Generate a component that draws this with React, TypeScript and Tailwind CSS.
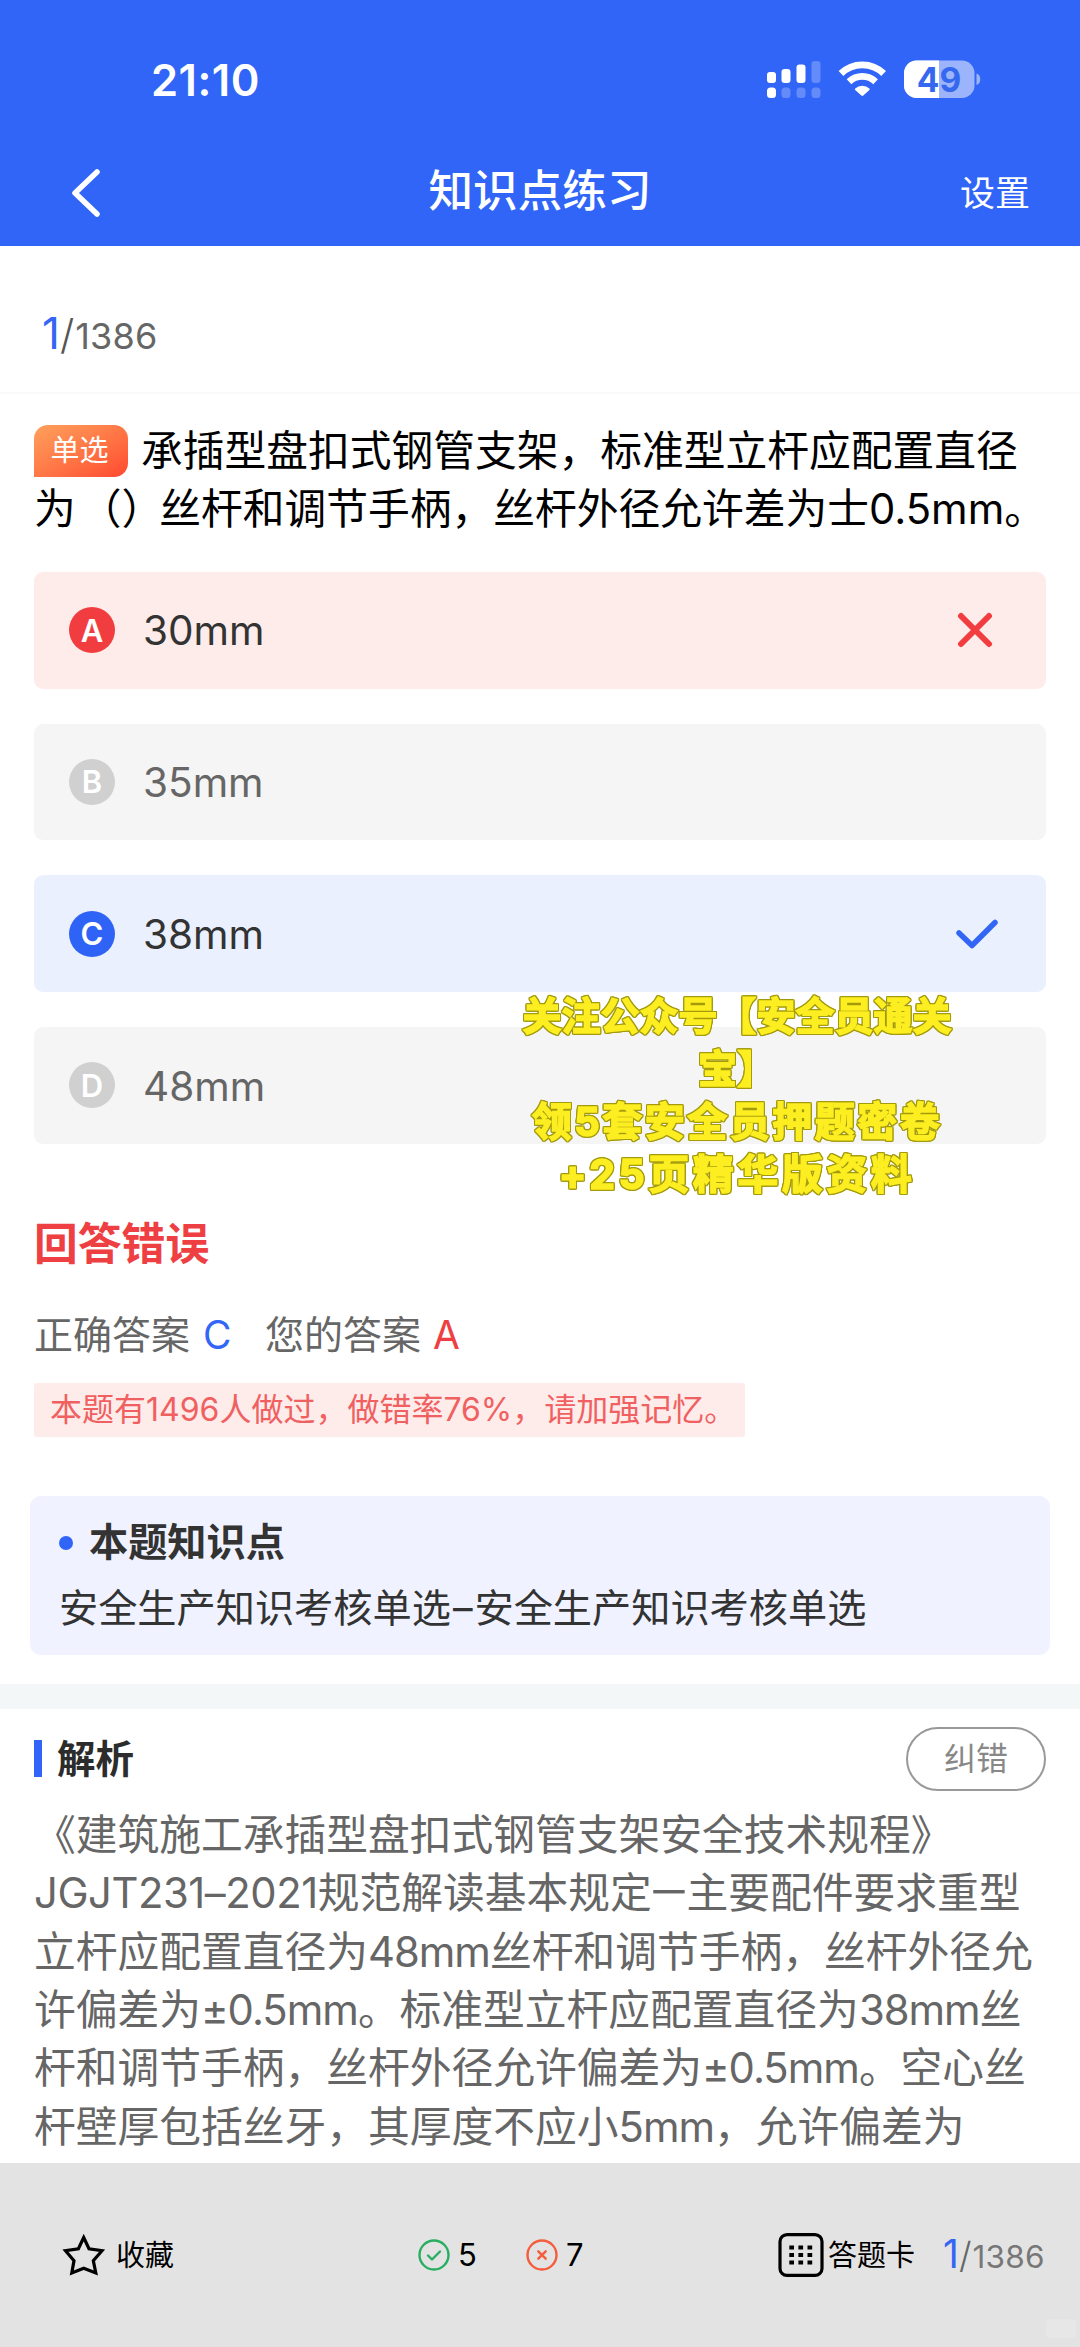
import React from "react";

type OptionState = "wrong" | "right" | "plain";

const optionBg: Record<OptionState, string> = {
  wrong: "bg-[#feeceb]",
  right: "bg-[#eaf0fe]",
  plain: "bg-[#f5f5f5]",
};
const optionBadge: Record<OptionState, string> = {
  wrong: "bg-[#f23d40]",
  right: "bg-[#2f63f6]",
  plain: "bg-[#d0d0d0]",
};
const optionText: Record<OptionState, string> = {
  wrong: "text-[#333]",
  right: "text-[#333]",
  plain: "text-[#666]",
};

const options: { letter: string; text: string; state: OptionState }[] = [
  { letter: "A", text: "30mm", state: "wrong" },
  { letter: "B", text: "35mm", state: "plain" },
  { letter: "C", text: "38mm", state: "right" },
  { letter: "D", text: "48mm", state: "plain" },
];

function Cross() {
  return (
    <svg className="mr-[53px] h-[36px] w-[36px]" viewBox="0 0 36 36" fill="none" stroke="#f23d40" strokeWidth="6" strokeLinecap="round">
      <path d="M4 4 32 32M32 4 4 32" />
    </svg>
  );
}

function Check() {
  return (
    <svg className="mr-[47px] h-[30px] w-[44px]" viewBox="0 0 44 30" fill="none" stroke="#3366f5" strokeWidth="5.500" strokeLinecap="round" strokeLinejoin="round">
      <path d="M4 14 17 26.500 40 3.500" />
    </svg>
  );
}

function Option({ letter, text, state }: { letter: string; text: string; state: OptionState }) {
  return (
    <div className={`flex h-[116.700px] items-center rounded-[9px] pl-[35px] ${optionBg[state]}`}>
      <span className={`flex h-[46px] w-[46px] items-center justify-center rounded-full pt-px text-[31px] font-semibold text-white ${optionBadge[state]}`}>
        {letter}
      </span>
      <span className={`ml-[28px] flex-1 pt-[3px] text-[40.500px] ${optionText[state]}`}>{text}</span>
      {state === "wrong" && <Cross />}
      {state === "right" && <Check />}
    </div>
  );
}

function StatusIcons() {
  return (
    <svg className="h-[40px] w-[216px]" viewBox="0 0 216 40">
      <g fill="#fff">
        <rect x="1" y="12" width="9" height="11" rx="3" />
        <rect x="15.500" y="9" width="9" height="14" rx="3" />
        <rect x="30.500" y="4.500" width="9" height="18.500" rx="3" />
        <rect x="45.500" y="1" width="9" height="22" rx="3" opacity=".25" />
        <rect x="1" y="27.500" width="9" height="10.500" rx="3.500" />
        <rect x="15.500" y="27.500" width="9" height="10.500" rx="3.500" opacity=".25" />
        <rect x="30.500" y="27.500" width="9" height="10.500" rx="3.500" opacity=".25" />
        <rect x="45.500" y="27.500" width="9" height="10.500" rx="3.500" opacity=".25" />
      </g>
      <g fill="none" stroke="#fff" strokeWidth="6.800">
        <path d="M75 13.500A30.500 30.500 0 0 1 117.600 13.500" />
        <path d="M83 21.700A19.500 19.500 0 0 1 109.600 21.700" />
      </g>
      <path fill="#fff" d="M89.200 28.600A10.500 10.500 0 0 1 103.400 28.600Q104 29.300 103.400 30L97.300 35.600Q96.300 36.400 95.300 35.600L89.200 30Q88.600 29.300 89.200 28.600Z" />
      <rect x="138" y="0.500" width="70.500" height="37.500" rx="12.500" fill="#9bb4fb" />
      <path fill="#fff" d="M173 0.500H150.500A12.500 12.500 0 0 0 138 13V25.500A12.500 12.500 0 0 0 150.500 38H173Z" />
      <path fill="#9bb4fb" d="M210.500 13.500C215.500 14.500 215.500 24 210.500 25Z" />
      <text x="173" y="31.500" textAnchor="middle" fontSize="33.500" fontWeight="700" fill="#3568ee">49</text>
    </svg>
  );
}

function Header() {
  return (
    <header className="flex h-[246px] flex-col bg-[#3065f8] text-white">
      <div className="flex h-[136px] items-start justify-between pt-[60px] pl-[151px] pr-[98px]">
        <span className="text-[43.500px] leading-[40px] font-semibold tracking-[0.5px]">21:10</span>
        <StatusIcons />
      </div>
      <div className="grid h-[110px] grid-cols-3 items-center">
        <svg className="ml-[69px] h-[50px] w-[34px]" viewBox="0 0 34 50" fill="none" stroke="#fff" strokeWidth="5.500" strokeLinecap="round" strokeLinejoin="round">
          <path d="M28 4 6 25 28 46" />
        </svg>
        <h1 className="pb-[3px] text-center text-[44.600px] leading-[107px] font-medium whitespace-nowrap">知识点练习</h1>
        <span className="pr-[50px] text-right text-[35px] leading-[114px]">设置</span>
      </div>
    </header>
  );
}

const explanation: string[] = [
  "《建筑施工承插型盘扣式钢管支架安全技术规程》",
  "JGJT231–2021规范解读基本规定一主要配件要求重型",
  "立杆应配置直径为48mm丝杆和调节手柄，丝杆外径允",
  "许偏差为±0.5mm。标准型立杆应配置直径为38mm丝",
  "杆和调节手柄，丝杆外径允许偏差为±0.5mm。空心丝",
  "杆壁厚包括丝牙，其厚度不应小5mm，允许偏差为",
];

/** Sets Latin runs and the narrow dash slightly tighter than the Chinese text. */
function Mixed({ text }: { text: string }) {
  const parts = text.split(/([A-Z0-9–]{6,}|[0-9.±m]+|一)/);
  return (
    <>
      {parts.map((p, i) => {
        if (i % 2 === 0) return p;
        const cls =
          p === "一"
            ? "-mx-[3.500px] inline-block scale-x-[0.82]"
            : p.length > 6
              ? "tracking-[-0.45px]"
              : "tracking-[-1px]";
        return (
          <span key={i} className={cls}>
            {p}
          </span>
        );
      })}
    </>
  );
}

function PromoText() {
  return (
    <div className="absolute top-[989px] left-[516px] w-[442px] text-center text-[39px] leading-[53px] font-bold whitespace-nowrap text-[#fcee21] [-webkit-text-stroke:1.5px_#fcee21] [filter:drop-shadow(1px_0_0_#a39a0c)_drop-shadow(-1px_0_0_#a39a0c)_drop-shadow(0_1px_0_#a39a0c)_drop-shadow(0_-1px_0_#a39a0c)]">
      <div>关注公众号【安全员通关</div>
      <div>宝】</div>
      <div className="text-[40px] tracking-[2.500px]">领5套安全员押题密卷</div>
      <div className="text-[41px] tracking-[3.500px]">+25页精华版资料</div>
    </div>
  );
}

function Footer() {
  return (
    <footer className="relative flex h-[184px] items-center bg-[#e3e3e3] text-[29px] text-black">
      <svg className="ml-[61px] h-[46px] w-[46px]" viewBox="0 0 46 46" fill="none" stroke="#000" strokeWidth="3.200" strokeLinejoin="miter">
        <path d="M22.700 5.500 28 16.800 41 18.700 32.300 28.600 34.800 41 22.700 36.200 10.800 41 13 28.600 4.500 18.700 17.400 16.800Z" />
      </svg>
      <span className="ml-[9px] w-[60px] pt-[2px]">收藏</span>
      <svg className="ml-[242px] h-[32px] w-[32px]" viewBox="0 0 32 32" fill="none" stroke="#27ae60" strokeWidth="2.400" strokeLinecap="round" strokeLinejoin="round">
        <circle cx="16" cy="16" r="14.500" />
        <path d="M10 16.500 14 20.500 22 12.500" />
      </svg>
      <span className="ml-[8px] w-[20px] text-[31px]">5</span>
      <svg className="ml-[48px] h-[32px] w-[32px]" viewBox="0 0 32 32" fill="none" stroke="#f45c3c" strokeWidth="2.400" strokeLinecap="round">
        <circle cx="16" cy="16" r="14.500" />
        <path d="M12.300 12.300 19.700 19.700M19.700 12.300 12.300 19.700" />
      </svg>
      <span className="ml-[8px] w-[20px] text-[31px]">7</span>
      <svg className="ml-[192px] h-[44px] w-[46px]" viewBox="0 0 46 44" fill="none" stroke="#000" strokeWidth="3.200">
        <rect x="2" y="1.600" width="42" height="40.800" rx="7" />
        <g strokeWidth="4" strokeDasharray="4.700 4.400">
          <path d="M11.300 14.500H34.300" />
          <path d="M11.300 22H34.300" />
          <path d="M11.300 29.500H34.300" />
        </g>
      </svg>
      <span className="ml-[4px] w-[90px] pt-[2px] whitespace-nowrap">答题卡</span>
      <span className="ml-[25px] flex items-baseline whitespace-nowrap">
        <span className="text-[39px] leading-[50px] text-[#3366f5]">1</span>
        <span className="text-[36px] font-light text-[#666]">/</span>
        <span className="ml-px text-[31.500px] tracking-[0.3px] text-[#777]">1386</span>
      </span>
      <span className="absolute right-[4px] bottom-[9px] h-[19px] w-[30px] rounded-[4px] bg-[#e7e7e7]" />
    </footer>
  );
}

export default function App() {
  return (
    <div className="relative flex h-[2347px] w-[1080px] flex-col overflow-hidden bg-white font-['Inter','Noto_Sans_CJK_SC',sans-serif] [text-spacing-trim:space-all]">
      <Header />
      <div className="flex h-[148px] items-baseline border-b-2 border-[#fafafa] pt-[58px] pl-[42px]">
        <span className="text-[44px] leading-[54px] text-[#3366f5]">1</span>
        <span className="text-[41px] font-light text-[#555]">/</span>
        <span className="ml-px text-[36px] tracking-[0.2px] text-[#666]">1386</span>
      </div>

      <main className="flex h-[1769px] flex-col overflow-hidden">
        <section className="px-[34px] pt-[28px] text-[41.750px] leading-[58px] whitespace-nowrap text-black">
          <div className="flex items-center">
            <span className="mr-[13px] flex h-[52px] w-[94px] items-center justify-center rounded-[14px] rounded-bl-none bg-linear-to-br from-[#ffa05c] to-[#ff4630] pr-[3px] text-[29px] text-white">
              单选
            </span>
            <span>承插型盘扣式钢管支架，标准型立杆应配置直径</span>
          </div>
          <div>
            为<span className="-mr-[4px] ml-[4px]">（）</span>丝杆和调节手柄，丝杆外径允许差为士0.5mm。
          </div>
        </section>

        <section className="mt-[34px] flex flex-col gap-[35px] px-[34px]">
          {options.map((o) => (
            <Option key={o.letter} {...o} />
          ))}
        </section>

        <section className="flex flex-col items-start px-[34px] whitespace-nowrap">
          <h2 className="mt-[73px] text-[43.800px] leading-[56px] font-bold text-[#ee4043]">回答错误</h2>
          <p className="mt-[35px] flex text-[39px] leading-[54px] text-[#666]">
            正确答案<span className="ml-[13px] w-[62px] text-[#3366f5]">C</span>
            您的答案<span className="ml-[12px] text-[#ee4043]">A</span>
          </p>
          <p className="mt-[21px] flex h-[54px] w-[711px] items-center rounded-[3px] bg-[#feeceb] pl-[16px] text-[32px] text-[#f06060]">
            本题有1496人做过，做错率76%，请加强记忆。
          </p>
        </section>

        <section className="mx-[30px] mt-[59px] h-[159px] shrink-0 rounded-[11px] bg-[#f0f3ff] pt-[19px] pl-[29px] text-[39.200px] whitespace-nowrap text-[#333]">
          <div className="flex h-[56px] items-center font-bold">
            <span className="mr-[16px] h-[14px] w-[14px] rounded-full bg-[#3065f8]" />
            本题知识点
          </div>
          <div className="mt-[9px] leading-[56px]">
            安全生产知识考核单选<span className="mx-[2px]">–</span>安全生产知识考核单选
          </div>
        </section>

        <div className="mt-[29px] h-[25px] shrink-0 bg-[#f3f7f8]" />

        <section className="px-[34px] pt-[18px]">
          <div className="flex h-[64px] items-center">
            <span className="h-[37px] w-[8px] bg-[#3065f8]" />
            <h3 className="ml-[15px] flex-1 pt-[2px] text-[38.500px] font-bold text-[#2c2c2c]">解析</h3>
            <span className="flex h-[64px] w-[140px] items-center justify-center rounded-full border-[2.500px] border-[#999] text-[32px] text-[#888]">
              纠错
            </span>
          </div>
          <div className="mt-[15px] text-[41.750px] leading-[58.400px] whitespace-nowrap text-[#666]">
            {explanation.map((l) => (
              <div key={l}>
                <Mixed text={l} />
              </div>
            ))}
          </div>
        </section>
      </main>

      <Footer />
      <PromoText />
    </div>
  );
}
